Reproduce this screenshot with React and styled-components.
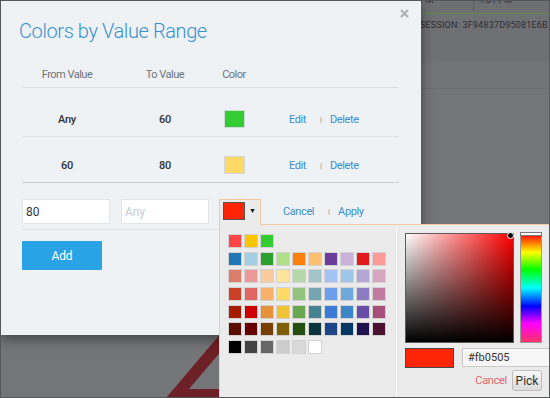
import React from "react";
import styled, { createGlobalStyle } from "styled-components";

const PALETTE = [
  ["#ff4545", "#ffc400", "#33cc33"],
  ["#1f77b4", "#a6cee3", "#2ca02c", "#b2df8a", "#ff7f0e", "#fdbf6f", "#6a3d9a", "#cab2d6", "#e31a1c", "#fb9a99"],
  ["#dd7e6b", "#ea9999", "#f9cb9c", "#ffe599", "#b6d7a8", "#a2c4c9", "#a4c2f4", "#9fc5e8", "#b4a7d6", "#d5a6bd"],
  ["#cc4125", "#e06666", "#f6b26b", "#ffd966", "#93c47d", "#76a5af", "#6d9eeb", "#6fa8dc", "#8e7cc3", "#c27ba0"],
  ["#a61c00", "#cc0000", "#e69138", "#f1c232", "#6aa84f", "#45818e", "#3c78d8", "#3d85c6", "#674ea7", "#a64d79"],
  ["#5b0f00", "#660000", "#783f04", "#7f6000", "#274e13", "#0c343d", "#1c4587", "#073763", "#20124d", "#4c1130"],
  ["#000000", "#434343", "#666666", "#cccccc", "#d9d9d9", "#ffffff"],
];

const ranges = [
  { from: "Any", to: "60", color: "#33cc33" },
  { from: "60", to: "80", color: "#ffd966" },
];

const App = () => {
  return (
    <>
      <GlobalStyle />
      <Screen>
        <BgPage>
          <BgTop>
            <BgCell>PM</BgCell>
            <BgDivider />
            <BgCell>1:31 PM</BgCell>
          </BgTop>
          <SessionBar>SESSION: 3F94837D95081E6B</SessionBar>
          <BgBand />
          <BgRest />
        </BgPage>

        <Logo width="548" height="396" viewBox="0 0 548 396">
          <path
            fillRule="evenodd"
            d="M165 397 L232 318 L320 397 Z M188 388 L233 335 L290 388 Z"
            fill="#6e2027"
          />
        </Logo>

        <Modal>
          <CloseIcon width="9" height="9" viewBox="0 0 9 9">
            <path d="M1 1 L8 8 M8 1 L1 8" stroke="#aeb1b4" strokeWidth="2.2" />
          </CloseIcon>
          <Title>Colors by Value Range</Title>

          <HeaderRow>
            <div>From Value</div>
            <div>To Value</div>
            <div>Color</div>
            <div />
          </HeaderRow>

          <TableBody>
            {ranges.map((r, i) => (
              <Row key={i} $last={i === ranges.length - 1}>
                <Value>{r.from}</Value>
                <Value>{r.to}</Value>
                <Swatch $color={r.color} />
                <Actions>
                  <Link>Edit</Link>
                  <Pipe>|</Pipe>
                  <Link>Delete</Link>
                </Actions>
              </Row>
            ))}
          </TableBody>

          <InputRow>
            <TextInput defaultValue="80" />
            <TextInput placeholder="Any" $gap />
            <PickerWrap>
              <ColorButton>
                <ButtonSwatch />
                <Caret>▼</Caret>
              </ColorButton>
              <Popup>
                <Palette>
                  {PALETTE.map((row, ri) => (
                    <PaletteRow key={ri}>
                      {row.map((c) => (
                        <PaletteSwatch key={c} $color={c} />
                      ))}
                    </PaletteRow>
                  ))}
                </Palette>
                <PickerPane>
                  <PickerTop>
                    <SatVal>
                      <SatDot />
                    </SatVal>
                    <HueBar>
                      <HueHandle />
                    </HueBar>
                  </PickerTop>
                  <PickerInputs>
                    <Preview />
                    <HexInput defaultValue="#fb0505" />
                  </PickerInputs>
                  <PickerActions>
                    <CancelText>Cancel</CancelText>
                    <PickButton>Pick</PickButton>
                  </PickerActions>
                </PickerPane>
              </Popup>
            </PickerWrap>
            <RowLinks>
              <Link>Cancel</Link>
              <Pipe>|</Pipe>
              <Link>Apply</Link>
            </RowLinks>
          </InputRow>

          <AddButton>Add</AddButton>
        </Modal>
      </Screen>
    </>
  );
};

export default App;

// Styles
const GlobalStyle = createGlobalStyle`
  html, body {
    margin: 0;
    padding: 0;
    background: #747579;
  }
  * {
    box-sizing: border-box;
  }
`;

const Screen = styled.div`
  position: relative;
  width: 550px;
  height: 398px;
  overflow: hidden;
  border: 1px solid #56575b;
  background: #747579;
  font-family: Roboto, "Liberation Sans", sans-serif;
`;

const BgPage = styled.div`
  display: flex;
  flex-direction: column;
  height: 100%;
`;

const BgTop = styled.div`
  height: 13px;
  display: flex;
  align-items: flex-start;
  padding-left: 419px;
  background: #6e6f73;
  border-bottom: 1px solid #5f8a50;
  overflow: hidden;
`;

const BgCell = styled.div`
  font-size: 9px;
  line-height: 9px;
  margin-top: -5px;
  color: #2c2d30;
  width: 53px;
  &:last-child {
    padding-left: 5px;
  }
`;

const BgDivider = styled.div`
  width: 1px;
  height: 10px;
  background: #5d5e62;
`;

const SessionBar = styled.div`
  height: 48px;
  padding: 6px 0 0 419px;
  background: #6f7074;
  font-size: 9px;
  line-height: 10px;
  letter-spacing: 0.2px;
  color: #2d2e32;
`;

const BgBand = styled.div`
  height: 27px;
  background: #737478;
  border-bottom: 1px solid #6d6e72;
`;

const BgRest = styled.div`
  flex: 1;
`;

const Logo = styled.svg`
  position: absolute;
  left: 0;
  top: 0;
`;

const Modal = styled.div`
  position: absolute;
  left: 0;
  top: 0;
  width: 420px;
  height: 334px;
  padding: 18px 22px 0 21px;
  background: #eff2f4;
  box-shadow: 0 4px 12px rgba(0, 0, 0, 0.45);
`;

const CloseIcon = styled.svg`
  position: absolute;
  left: 399px;
  top: 8px;
`;

const Title = styled.h2`
  margin: 0 0 0 -3px;
  font-size: 20px;
  line-height: 24px;
  font-weight: 300;
  letter-spacing: -0.4px;
  color: #3a91cf;
`;

const Columns = styled.div`
  display: grid;
  grid-template-columns: 90px 106px 32px 1fr;
  align-items: center;
  text-align: center;
`;

const HeaderRow = styled(Columns)`
  margin-top: 25px;
  padding-bottom: 6px;
  border-bottom: 1px solid #d9dfe3;
  font-size: 11px;
  line-height: 13px;
  letter-spacing: -0.5px;
  color: #6f7377;
`;

const TableBody = styled.div`
  padding-top: 3px;
`;

const Row = styled(Columns)`
  padding: 19px 0 8px;
  border-bottom: 1px solid ${(p) => (p.$last ? "#c8d2d9" : "#dce2e6")};
`;

const Value = styled.div`
  font-size: 11px;
  font-weight: 500;
  letter-spacing: -0.3px;
  color: #2f3336;
`;

const Swatch = styled.div`
  width: 21px;
  height: 18px;
  margin: 0 auto;
  border: 1px solid #d3d8db;
  background: ${(p) => p.$color};
`;

const Actions = styled.div`
  display: flex;
  align-items: center;
  padding-left: 39px;
`;

const Link = styled.span`
  font-size: 11px;
  letter-spacing: -0.4px;
  color: #3a8fcf;
`;

const Pipe = styled.span`
  font-size: 8px;
  font-weight: 700;
  color: #9a9ea2;
  margin: 0 8px 0 14px;
`;

const InputRow = styled.div`
  display: flex;
  align-items: flex-start;
  padding: 16px 0 4px;
  border-bottom: 1px solid #dde2e5;
`;

const TextInput = styled.input`
  width: 88px;
  height: 25px;
  margin-left: ${(p) => (p.$gap ? "11px" : "0")};
  padding: 0 3px;
  border: 1px solid #e1e5e8;
  background: #fff;
  font-family: Roboto, "Liberation Sans", sans-serif;
  font-size: 12px;
  color: #333;
  outline: none;

  &::placeholder {
    color: #c8cbce;
  }
`;

const PickerWrap = styled.div`
  position: relative;
  margin-left: 10px;
`;

const ColorButton = styled.div`
  position: relative;
  z-index: 2;
  display: flex;
  align-items: flex-start;
  width: 42px;
  height: 26px;
  padding: 2px 0 0 3px;
  border: 1px solid #f3c9a2;
  border-bottom: none;
  background: #ebebeb;
`;

const ButtonSwatch = styled.div`
  width: 22px;
  height: 18px;
  border: 1px solid #555;
  background: #fc2606;
`;

const Caret = styled.span`
  margin: 6px 0 0 4px;
  font-size: 7px;
  line-height: 7px;
  color: #111;
`;

const RowLinks = styled.div`
  display: flex;
  align-items: center;
  height: 25px;
  margin-left: 22px;
`;

const Popup = styled.div`
  position: absolute;
  z-index: 1;
  top: 25px;
  left: 0;
  width: 332px;
  height: 180px;
  display: flex;
  border: 1px solid #f3cba6;
  background: #ebebeb;
`;

const Palette = styled.div`
  width: 176px;
  padding: 9px 0 0 8px;
  display: flex;
  flex-direction: column;
  gap: 3.67px;
`;

const PaletteRow = styled.div`
  display: flex;
  gap: 2px;
`;

const PaletteSwatch = styled.div`
  width: 14px;
  height: 14px;
  border: 1px solid #d2d2d2;
  background: ${(p) => p.$color};
`;

const PickerPane = styled.div`
  width: 154px;
  padding: 8px 8px 0;
  border-left: 1px solid #f8f8f8;
`;

const PickerTop = styled.div`
  display: flex;
  gap: 6px;
`;

const SatVal = styled.div`
  position: relative;
  width: 109px;
  height: 110px;
  border: 1px solid #5b5b5b;
  background: linear-gradient(to top, #000, rgba(0, 0, 0, 0)),
    linear-gradient(to right, #fff, rgba(255, 255, 255, 0)), #ff0000;
`;

const SatDot = styled.div`
  position: absolute;
  left: 101px;
  top: -2px;
  width: 7px;
  height: 7px;
  border-radius: 50%;
  background: #000;
  border: 1.5px solid #fff;
`;

const HueBar = styled.div`
  position: relative;
  width: 22px;
  height: 110px;
  border: 1px solid #9a9a9a;
  background: linear-gradient(
    to bottom,
    #ff0000 0%,
    #ffff00 17%,
    #00ff00 33%,
    #00ffff 50%,
    #0000ff 67%,
    #ff00ff 83%,
    #ff3366 100%
  );
`;

const HueHandle = styled.div`
  position: absolute;
  left: -1px;
  right: -1px;
  top: -2px;
  height: 4px;
  background: #fff;
  border: 1px solid #777;
`;

const PickerInputs = styled.div`
  display: flex;
  margin-top: 5px;
`;

const Preview = styled.div`
  flex-shrink: 0;
  width: 49px;
  height: 20px;
  border: 1px solid #4a4a4a;
  background: #fc2606;
`;

const HexInput = styled.input`
  flex-shrink: 0;
  width: 100px;
  height: 19px;
  margin-left: 8px;
  padding: 0 5px;
  border: 1px solid #c9c9c9;
  background: #f6f6f6;
  font-family: Roboto, "Liberation Sans", sans-serif;
  font-size: 11px;
  color: #333;
  outline: none;
`;

const PickerActions = styled.div`
  display: flex;
  justify-content: flex-end;
  align-items: center;
  margin-top: 2px;
`;

const CancelText = styled.span`
  margin-right: 5px;
  font-size: 11px;
  letter-spacing: -0.3px;
  color: #e2676b;
`;

const PickButton = styled.button`
  width: 30px;
  height: 21px;
  padding: 0;
  border: 1px solid #bdbdbd;
  border-radius: 3px;
  background: linear-gradient(to bottom, #f7f7f7, #dcdcdc);
  font-family: Roboto, "Liberation Sans", sans-serif;
  font-size: 12px;
  color: #333;
`;

const AddButton = styled.button`
  display: block;
  width: 80px;
  height: 29px;
  margin-top: 11px;
  border: none;
  border-radius: 1px;
  background: #2aa3e6;
  color: #fff;
  font-family: Roboto, "Liberation Sans", sans-serif;
  font-size: 12px;
  letter-spacing: -0.2px;
`;
